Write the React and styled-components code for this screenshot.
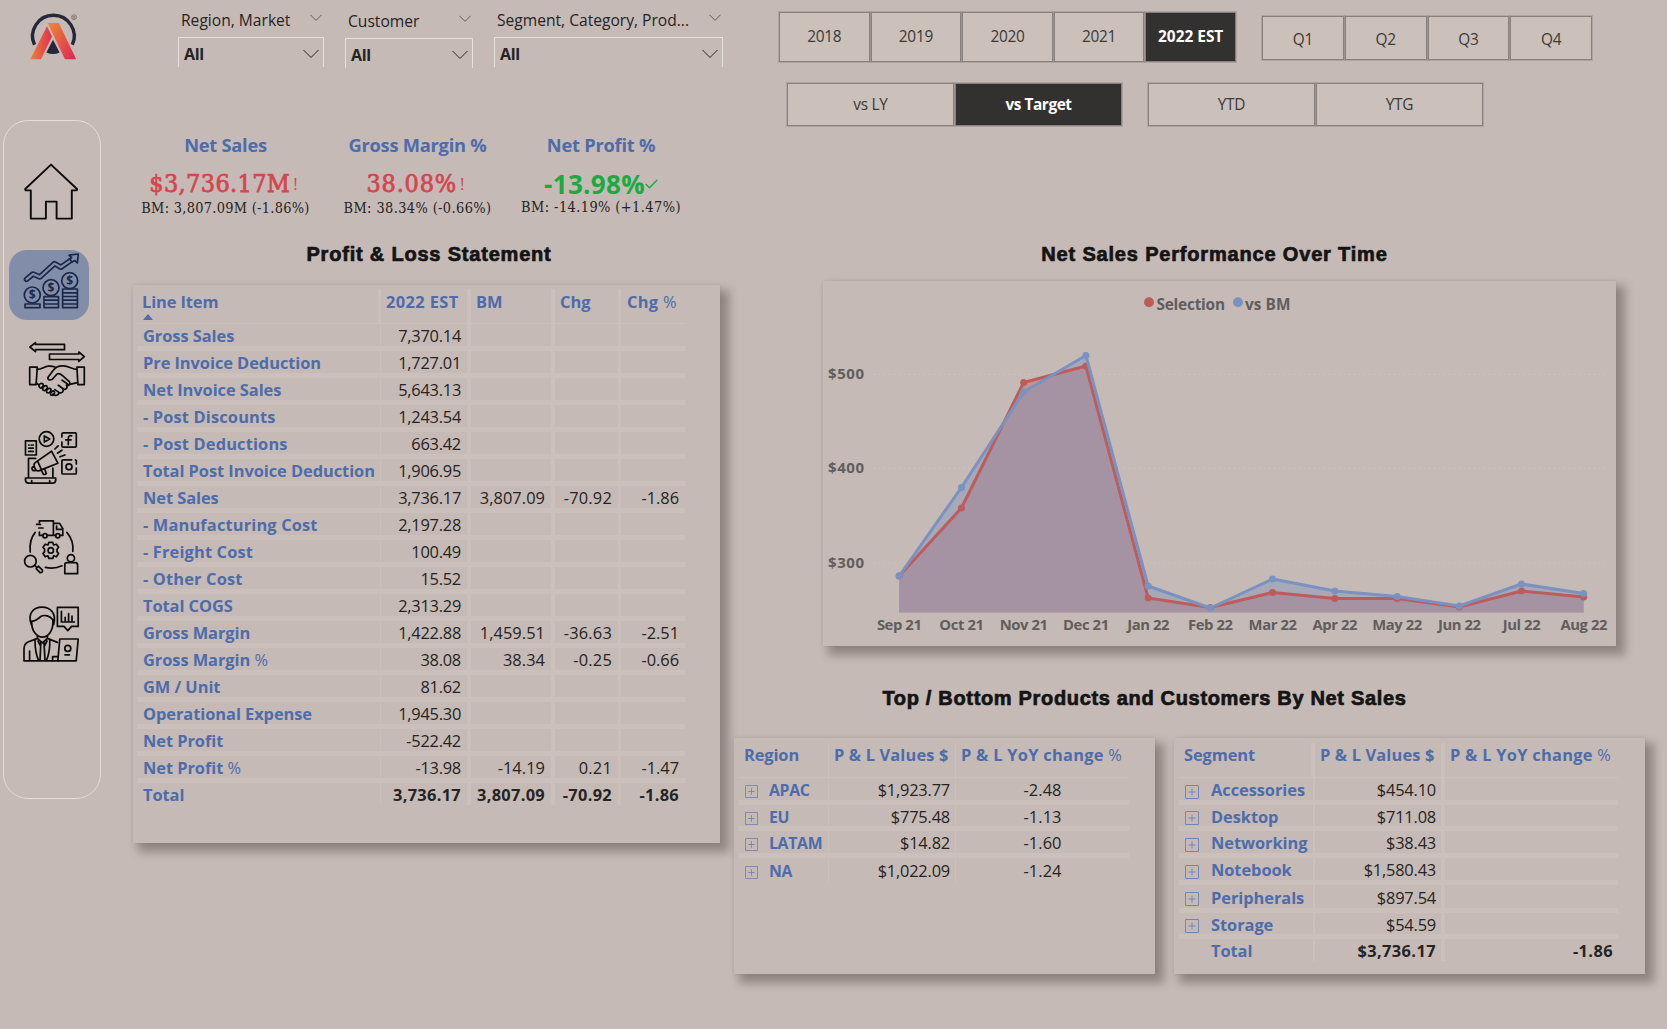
import React from "react";
import styled, { createGlobalStyle, css } from "styled-components";

const sans = `"Open Sans", "Noto Sans", sans-serif`;
const serif = `"DejaVu Serif Condensed", "DejaVu Serif", serif`;
const blue = "#4d6ca9";
const band = "#cbc0bb";

const Global = createGlobalStyle`
  * { box-sizing: border-box; }
  body { margin: 0; background: #c5bab6; font-family: ${sans}; color: #252423; }
`;

const Page = styled.div`
  display: flex;
  width: 1667px;
  height: 1029px;
  overflow: hidden;
  background: #c5bab6;
`;

/* ---------- side rail ---------- */
const Rail = styled.aside`
  width: 133px;
  flex: none;
  padding-left: 3px;
`;
const LogoBox = styled.div`
  height: 120px;
  padding: 10px 0 0 22px;
`;
const Nav = styled.nav`
  width: 98px;
  height: 679px;
  border: 1px solid #e4dddb;
  border-radius: 25px;
  padding: 36px 0 0 5px;
  display: flex;
  flex-direction: column;
`;
const NavItem = styled.a`
  display: block;
  width: 80px;
  height: 70px;
  flex: none;
  margin-top: ${(p) => p.$gap}px;
  border-radius: 18px;
  color: ${(p) => (p.$active ? "#1c2849" : "#0b0b0b")};
  background: ${(p) => (p.$active ? "#818da9" : "transparent")};
`;
const Glyph = styled.svg`
  display: block;
  width: 80px;
  height: 70px;
  fill: none;
  stroke: currentColor;
  stroke-width: ${(p) => p.$w || 1.7};
  stroke-linejoin: round;
  stroke-linecap: round;
  overflow: visible;
`;
const Coin = styled.text`
  font: 700 12px ${sans};
  fill: currentColor;
  stroke: none;
  text-anchor: middle;
`;

function Logo() {
  return (
    <svg width="56" height="52" viewBox="25 10 56 52">
      <defs>
        <linearGradient id="legL" x1="0" x2="1">
          <stop offset="0" stopColor="#ee8136" />
          <stop offset="1" stopColor="#e02f52" />
        </linearGradient>
        <linearGradient id="legR" x1="0" y1="0" x2="1" y2="0.8">
          <stop offset="0.1" stopColor="#ee8136" />
          <stop offset="1" stopColor="#de2c52" />
        </linearGradient>
      </defs>
      <path d="M34.5 44.8A20.8 20.8 0 1 1 72.3 44.8" fill="none" stroke="#25283c" strokeWidth="3.4" />
      <path d="M47 26.3 52 36.6 41 59.3H30.3Z" fill="url(#legL)" />
      <path d="M47.7 23H58.8L76.2 59.3H65Z" fill="url(#legR)" />
      <path d="M53 39.8 59.6 52.6Q53 55.6 46.4 52.6Z" fill="#25283c" />
      <circle cx="74" cy="17.2" r="2.4" fill="none" stroke="#5a5658" strokeWidth="0.6" />
      <text x="74" y="18.7" fontSize="4" textAnchor="middle" fontFamily="Liberation Sans, sans-serif" fill="#4a4648">R</text>
    </svg>
  );
}

const HomeIcon = () => (
  <Glyph $w={1.9} viewBox="0 0 80 70">
    <path d="M42 7.6 16.2 32Q16 33.4 17.5 33.4H21.8V61.6H36.9V44.6H47.6V61.6H62.8V33.4H67Q68.6 33.2 68 32Z" />
  </Glyph>
);
const GrowthIcon = () => (
  <Glyph $w={1.7} viewBox="0 0 80 70">
    <path strokeWidth="5.6" d="M17.5 29.3 24 24 30.8 27 45.5 13.6 52 17.2 64 8.8" />
    <path stroke="#818da9" strokeWidth="2.2" d="M17.5 29.3 24 24 30.8 27 45.5 13.6 52 17.2 64 8.8" />
    <path fill="#818da9" d="M60 5.2 69.2 4 68.4 13 66 10.6 63 12 60.8 9.4 62.6 7.4Z" />
    <circle cx="23.3" cy="45" r="8" />
    <circle cx="42" cy="37.7" r="8" />
    <circle cx="60.7" cy="30.7" r="8" />
    <Coin x="23.3" y="49.3">$</Coin>
    <Coin x="42" y="42">$</Coin>
    <Coin x="60.7" y="35">$</Coin>
    <path d="M16 54H31V57.6H16ZM35 46.6H49.5V50.2H35ZM35 50.2H49.5V54H35ZM35 54H49.5V57.6H35ZM53.6 39H68.4V42.8H53.6ZM53.6 42.8H68.4V46.5H53.6ZM53.6 46.5H68.4V50.2H53.6ZM53.6 50.2H68.4V54H53.6ZM53.6 54H68.4V57.6H53.6Z" />
  </Glyph>
);
const HandshakeIcon = () => (
  <Glyph viewBox="0.5 0 80 70">
    <path d="M21.4 13 27 8.6V10.4H56V15.7H27V17.6ZM41 20H70.3V18L75.8 22.7 70.3 27.4V25.5H41Z" />
    <path d="M21.2 33.2H28.8L27.6 50.6H21.2ZM75.8 33.2H68.4L69.4 50.6H75.8Z" />
    <path d="M28.6 35.4C33 35.6 35.8 32.4 39.5 32.2 42 32 44.5 32.2 46.5 33" />
    <path d="M68.4 35.4C64 35.2 60 32 55 31.8 50 31.6 46.5 33.4 44.6 36.6L39.6 43.2C38.6 45.4 41.4 46.8 43.6 45.4L48.6 40C50.6 39 52.4 40.2 54 41.6L60.8 47.6C62.6 50 60.6 52.4 58 51.2" />
    <path d="M69 48.6C66.6 48.8 64.6 50 62 50.2M27.8 48.8 30.4 51.2" />
    <path d="M58 51.2C59.6 54 57 56.4 54.4 54.8 55.6 58 52.6 59.8 50.2 58.4 50.6 61.6 46.4 62.2 44.2 60.2M60 50.6 53.6 46.2M54.6 54.8 49.8 51.2M50.4 58.4 46.4 55.6" />
    <path d="M30.6 52.6C29.6 50.4 32.6 48.4 34.4 49.8 35.6 51.2 33.4 54.4 31.8 54 31 53.8 30.8 53.2 30.6 52.6ZM34.2 55.2C33.8 52.8 37 50.8 38.4 52.2 39.8 53.8 37.4 56.8 35.8 56.6 34.8 56.4 34.3 56 34.2 55.2ZM38 57.6C37.8 55.2 40.8 53.4 42.2 54.8 43.4 56.4 41.2 59.2 39.6 59 38.6 58.8 38.1 58.4 38 57.6ZM42 60C42 57.8 44.6 56.2 45.8 57.4 46.8 59 45 61.4 43.6 61.4 42.6 61.4 42 61 42 60Z" />
  </Glyph>
);
const MarketingIcon = () => (
  <Glyph viewBox="0.3 0 80 70">
    <path d="M16.8 18.8H27.6V33H16.8ZM20 23H20.4M22.4 23H24.6M20 26.2H24.6M20 29.4H24.6" />
    <circle cx="37.8" cy="17" r="7.3" />
    <path d="M35.6 13.9 41 17 35.6 20.1ZM53.2 15V12Q53.2 10.8 54.6 10.8H66.4Q67.6 10.8 67.6 12V24Q67.6 25.2 66.4 25.2H54.6Q53.2 25.2 53.2 24V20" />
    <path d="M63 13.8Q59.6 13.2 59.6 16.6V22.6M57 17.8H62.4" />
    <path d="M67.6 46V51Q67.6 52 66.6 52H54.4Q53.2 52 53.2 51V39Q53.2 37.8 54.4 37.8H63M66.8 37.8 67.6 38.6V42" />
    <circle cx="60.3" cy="44.8" r="3" />
    <path d="M27 36.4H19.8V55.2M44.2 46V55.2M16.8 56H47V58Q47 61.2 44 61.2H20Q16.8 61.2 16.8 58ZM23 58.6V61M41 58.6V61" />
    <path d="M42.8 29.2 49.2 41.2M42.8 29.2 26.4 40.6Q24.8 42 25.4 44.2L27 47.8Q28 49.4 30.6 48.6L49.2 41.2M29 39.4 32.6 47.4M25.2 44.4Q22.8 45.2 23.4 47.4 24.2 49.4 27 48.4M32.6 48.2 34.6 52.2Q36.2 53 37.6 51.6L36 47" />
    <path d="M46.2 27 49.4 23.8M48.8 31.2 53.2 28.2M51.2 34.8 56.2 33" />
  </Glyph>
);
const SupplyIcon = () => (
  <Glyph viewBox="0 0 80 70">
    <path d="M30.4 20V23.4H33.6M30.4 10.6V8.8H44.4V23.4H38.4M44.4 11.4H50.6L53.8 16.6V23.4H51M46.6 23.4H44.4M47.6 14V17.4H53.4M27.6 12.4H31.4M29.8 16H34" />
    <circle cx="36" cy="23.8" r="2.1" />
    <circle cx="48.8" cy="23.8" r="2.1" />
    <circle cx="41.8" cy="38.4" r="2.7" />
    <path d="M39.8 30.4H43.8L44.6 33 47.4 32.2 49.6 35.2 48 37.2V39.6L49.6 41.6 47.4 44.8 44.6 43.8 43.8 46.4H39.8L39 43.8 36.2 44.8 34 41.6 35.6 39.6V37.2L34 35.2 36.2 32.2 39 33Z" />
    <path d="M26.2 20.4Q20 28 21.2 40M57.8 20.4Q65 28.6 63.8 39.4M36.4 55.4Q45 57.6 53 53.8" />
    <circle cx="21.4" cy="49.2" r="5.8" />
    <path d="M25.6 53.4 27.6 55.2M29.4 54.2 33.4 58.2Q33.8 60.8 31 60.6L27.2 56.6Z" />
    <circle cx="61.9" cy="46.2" r="3.6" />
    <path d="M55.8 61.6V53Q55.8 50.6 58 50.6H66.4Q68.6 50.6 68.6 53V61.6Z" />
  </Glyph>
);
const ExecutiveIcon = () => (
  <Glyph viewBox="0 0 80 70">
    <path d="M22.4 25.6C18 14 25 8.2 33 8.2S48 14 44.6 25.6M22.8 22.4C26 22 29 20 31.6 17.6 36 15 41 17.4 43.8 20.6M22.8 22C22 32 28 38.2 33.4 38.2S44.8 32 43.8 21" />
    <path d="M48.4 8.4H69.2V27.4H62.6L58.8 31.6 55 27.4H48.4ZM52.4 12.4V23H65.4M56.2 22.6V18.4M59.6 22.6V14.6M63 22.6V17" />
    <path d="M28.4 37V39.4L19 43Q15 45 15 50V61.8H49M38.4 37V39.4L48.4 43.4M20.6 52V61.6M28.4 39.4 33.4 43.8 38.4 39.4M26 40.6C26 49 27 56 29.6 61.6M40.8 40.6C41 49 40 56 37.4 61.6M31.8 43.6 31 61.6M35 43.6 36 61.6M29 42 31.6 47M38 42 35.4 47" />
    <path d="M50.8 40H69.2L67.2 61.8H48.8ZM48.6 57.6H43.6V61.8M56 55.8H60.4" />
    <circle cx="58.8" cy="49.4" r="3" />
  </Glyph>
);

const navItems = [
  { id: "home", gap: 0, Icon: HomeIcon },
  { id: "finance", gap: 23, Icon: GrowthIcon, active: true },
  { id: "sales", gap: 14, Icon: HandshakeIcon },
  { id: "marketing", gap: 18, Icon: MarketingIcon },
  { id: "supply", gap: 20, Icon: SupplyIcon },
  { id: "executive", gap: 17, Icon: ExecutiveIcon },
];

/* ---------- filters ---------- */
const LeftColumn = styled.div`
  width: 601px;
  flex: none;
`;
const Filters = styled.div`
  display: flex;
  height: 120px;
  padding-left: 45px;
`;
const Filter = styled.div`
  width: ${(p) => p.$w}px;
  margin-left: ${(p) => p.$ml || 0}px;
  padding-top: ${(p) => p.$top}px;
`;
const FilterHead = styled.div`
  display: flex;
  justify-content: space-between;
  height: 27px;
  padding: 0 2px 0 3px;
  font-size: 15.6px;
  line-height: 21px;
  white-space: nowrap;
`;
const FilterBox = styled.div`
  display: flex;
  justify-content: space-between;
  align-items: center;
  height: 30px;
  padding: 3px 4px 0 5px;
  border: 1.5px solid #e6e0de;
  border-bottom: 0;
  font-size: 16px;
  font-weight: 700;
  letter-spacing: -0.3px;
`;
const Chevron = ({ w = 16, color = "#252423" }) => (
  <svg width={w} height={w * 0.6} viewBox="0 0 16 9.6" fill="none" stroke={color} strokeWidth={16 / w}>
    <path d="M0.5 1 8 8.5 15.5 1" />
  </svg>
);
const HeadChevron = styled.span`
  display: block;
  line-height: 0;
  padding-top: 4px;
`;

/* ---------- KPI ---------- */
const Kpis = styled.div`
  display: flex;
  height: 122px;
`;
const Kpi = styled.div`
  width: ${(p) => p.$w}px;
  text-align: center;
  white-space: nowrap;
`;
const KpiLabel = styled.div`
  height: 48px;
  padding-top: 12px;
  color: ${blue};
  font-size: 18.3px;
  font-weight: 700;
  line-height: 26px;
  letter-spacing: -0.25px;
`;
const KpiValue = styled.div`
  display: flex;
  justify-content: center;
  align-items: center;
  height: 30px;
  ${(p) =>
    p.$good
      ? css`
          color: #1aab40;
          font: 700 26px/30px ${sans};
          letter-spacing: 0.3px;
          padding-top: 1px;
        `
      : css`
          color: #d64550;
          font: 400 25px/30px ${serif};
          -webkit-text-stroke: 0.75px #d64550;
          letter-spacing: ${p.$ls}px;
          padding: 2px 4px 0 0;
        `}
`;
const Bang = styled.span`
  font: 400 17px/30px ${sans};
  margin-left: 3px;
  letter-spacing: 0;
  -webkit-text-stroke: 0;
`;
const KpiBench = styled.div`
  font: 400 14.4px/20px ${serif};
  margin-top: ${(p) => p.$mt || 0}px;
  letter-spacing: ${(p) => p.$ls || 0}px;
`;

/* ---------- titles, cards ---------- */
const Title = styled.h2`
  margin: 0;
  text-align: center;
  font: 700 20px/24px "Liberation Sans", Arial, sans-serif;
  color: #141414;
  -webkit-text-stroke: 0.7px #141414;
  letter-spacing: ${(p) => p.$ls}px;
  height: ${(p) => p.$h}px;
  padding-right: ${(p) => p.$pr || 0}px;
  white-space: nowrap;
`;
const Card = styled.section`
  width: ${(p) => p.$w}px;
  height: ${(p) => p.$h}px;
  background: #c5bab6;
  box-shadow: 7px 7px 9px 2px rgba(20, 8, 6, 0.29), 0 0 3px rgba(0, 0, 0, 0.08);
`;

/* ---------- tables ---------- */
const Grid = styled.div`
  display: grid;
  grid-template-columns: ${(p) => p.$cols};
  width: max-content;
  margin-left: ${(p) => p.$ml}px;
  padding-top: ${(p) => p.$pt}px;
`;
const Head = styled.div`
  height: ${(p) => p.$h}px;
  border-bottom: 1px solid ${band};
  border-right: ${(p) => p.$bar}px solid ${band};
  padding: ${(p) => p.$pad};
  color: ${blue};
  font-size: 16.4px;
  font-weight: 700;
  line-height: 22px;
  letter-spacing: ${(p) => p.$ls || 0}px;
  white-space: nowrap;
`;
const SortUp = styled.i`
  display: block;
  width: 0;
  margin: 1px 0 0 1px;
  border: 5.5px solid transparent;
  border-top: 0;
  border-bottom: 6px solid ${blue};
`;
const Cell = styled.div`
  display: flex;
  align-items: center;
  justify-content: ${(p) => p.$align || "flex-end"};
  height: ${(p) => p.$h}px;
  border-bottom: ${(p) => (p.$last ? 0 : 5)}px solid ${band};
  border-right: ${(p) => p.$bar}px solid ${band};
  padding: ${(p) => p.$pad};
  font-size: ${(p) => p.$size || 16.4}px;
  font-weight: ${(p) => (p.$label || p.$bold ? 700 : 400)};
  letter-spacing: ${(p) => p.$ls || 0}px;
  color: ${(p) => (p.$label ? blue : "#252423")};
  line-height: 20px;
  white-space: pre;
`;
const Light = styled.span`
  font-weight: 500;
`;
const withLightPercent = (text) =>
  text.endsWith("%") ? <>{text.slice(0, -1)}<Light>%</Light></> : text;

const plRows = [
  ["Gross Sales", "7,370.14"],
  ["Pre Invoice Deduction", "1,727.01"],
  ["Net Invoice Sales", "5,643.13"],
  ["- Post Discounts", "1,243.54"],
  ["- Post Deductions", "663.42"],
  ["Total Post Invoice Deduction", "1,906.95"],
  ["Net Sales", "3,736.17", "3,807.09", "-70.92", "-1.86"],
  ["- Manufacturing Cost", "2,197.28"],
  ["- Freight Cost", "100.49"],
  ["- Other Cost", "15.52"],
  ["Total COGS", "2,313.29"],
  ["Gross Margin", "1,422.88", "1,459.51", "-36.63", "-2.51"],
  ["Gross Margin %", "38.08", "38.34", "-0.25", "-0.66"],
  ["GM / Unit", "81.62"],
  ["Operational Expense", "1,945.30"],
  ["Net Profit", "-522.42"],
  ["Net Profit %", "-13.98", "-14.19", "0.21", "-1.47"],
  ["Total", "3,736.17", "3,807.09", "-70.92", "-1.86"],
];
const plBars = [1, 4, 4, 3, 0];
const plSpacing = [0, -0.25, 0.05, 0.2, -0.05];

function ProfitLoss() {
  return (
    <Grid $cols="244px 90px 84px 66px 64px" $ml={4} $pt={4}>
      <Head $h={35} $bar={3} $pad="2px 0 0 5px" $ls={-0.1}>Line Item<SortUp /></Head>
      <Head $h={35} $bar={4} $pad="2px 0 0 5px" $ls={0.4}>2022 EST</Head>
      <Head $h={35} $bar={4} $pad="2px 0 0 5px">BM</Head>
      <Head $h={35} $bar={3} $pad="2px 0 0 5px">Chg</Head>
      <Head $h={35} $bar={0} $pad="2px 0 0 6px" $ls={0.3}>{withLightPercent("Chg %")}</Head>
      {plRows.map((r, i) => {
        const last = i === plRows.length - 1;
        const common = { $h: last ? 22 : 27, $last: last };
        return (
          <React.Fragment key={i}>
            <Cell {...common} $label $align="flex-start" $bar={1} $pad="2px 0 0 6px" $ls={r[0].startsWith("-") ? 0.15 : -0.05}>
              {withLightPercent(r[0])}
            </Cell>
            {[1, 2, 3, 4].map((c) => (
              <Cell key={c} {...common} $bold={last} $bar={plBars[c]} $pad="2px 6px 0 0" $ls={last ? 0.3 : plSpacing[c]}>
                {r[c]}
              </Cell>
            ))}
          </React.Fragment>
        );
      })}
    </Grid>
  );
}

/* ---------- slicer buttons ---------- */
const RightColumn = styled.div`
  flex: 1;
`;
const Slicers = styled.div`
  display: flex;
  align-items: flex-start;
  height: ${(p) => p.$h}px;
  padding: ${(p) => p.$pad};
`;
const Slicer = styled.div`
  display: flex;
  gap: ${(p) => p.$gap || 1}px;
  margin: ${(p) => p.$m || 0};
`;
const Tile = styled.button`
  width: ${(p) => p.$w}px;
  height: ${(p) => p.$h}px;
  padding: ${(p) => p.$pad || "1px 0 0"};
  border: 1.5px solid #88807d;
  outline: 1px solid rgba(110, 100, 98, 0.25);
  outline-offset: -0.5px;
  background: ${(p) => (p.$on ? "#323130" : "#cbc0ba")};
  color: ${(p) => (p.$on ? "#fff" : "#3b3a39")};
  font: ${(p) => (p.$on ? 700 : 400)} 15.4px/20px ${sans};
  letter-spacing: ${(p) => p.$ls ?? -0.25}px;
  white-space: nowrap;
`;

/* ---------- chart ---------- */
const Tick = styled.text`
  font: 700 ${(p) => p.$size || 15}px ${sans};
  fill: #605e5c;
  text-anchor: ${(p) => p.$anchor || "middle"};
  letter-spacing: ${(p) => p.$ls || 0}px;
`;
const Plot = styled.svg`
  display: block;
`;
const months = ["Sep 21", "Oct 21", "Nov 21", "Dec 21", "Jan 22", "Feb 22", "Mar 22", "Apr 22", "May 22", "Jun 22", "Jul 22", "Aug 22"];
const benchY = [576, 487.5, 392, 355.5, 586, 608, 579, 591, 596.5, 606, 584, 593.5];
const selectY = [576, 508, 382.5, 366, 598, 607.5, 592.5, 598.5, 598.5, 607, 591, 597];
const px = (i) => 899.2 + i * 62.23;

function Series({ ys, color }) {
  const pts = ys.map((y, i) => `${px(i)},${y}`).join(" ");
  return (
    <>
      <polyline points={pts} fill="none" stroke={color} strokeWidth="3" strokeLinejoin="round" />
      {ys.map((y, i) => <circle key={i} cx={px(i)} cy={y} r="3.5" fill={color} />)}
    </>
  );
}
function Area({ ys, color }) {
  const pts = ys.map((y, i) => `${px(i)},${y}`).join(" ");
  return <polygon points={`${px(0)},612.5 ${pts} ${px(11)},612.5`} fill={color} fillOpacity="0.4" />;
}
function SalesChart() {
  return (
    <Plot width="793" height="365" viewBox="823 281 793 365">
      <circle cx="1149" cy="302.3" r="5" fill="#be5c5c" />
      <Tick x="1156.5" y="309.5" $anchor="start" $size={15.4} textLength="68.5">Selection</Tick>
      <circle cx="1238" cy="302.3" r="5" fill="#7a92bf" />
      <Tick x="1245" y="309.5" $anchor="start" $size={15.4} textLength="45.5">vs BM</Tick>
      {[["$500", 374.5], ["$400", 468.5], ["$300", 563]].map(([t, y]) => (
        <g key={t}>
          <line x1="874" x2="1606" y1={y} y2={y} stroke="#d0c5c8" strokeDasharray="1 4" />
          <Tick x="828" y={y + 4.7} $anchor="start" textLength="36">{t}</Tick>
        </g>
      ))}
      <Area ys={selectY} color="#be5c5c" />
      <Area ys={benchY} color="#7a92bf" />
      <Series ys={selectY} color="#be5c5c" />
      <Series ys={benchY} color="#7a92bf" />
      {months.map((m, i) => (
        <Tick key={m} x={px(i)} y="630" $size={14.8} $ls={-0.4}>{m}</Tick>
      ))}
    </Plot>
  );
}

/* ---------- breakdown tables ---------- */
const Pair = styled.div`
  display: flex;
  gap: 19px;
`;
const Plus = styled.svg`
  flex: none;
  margin: 3px ${(p) => p.$mr}px 0 0;
  fill: none;
  stroke: #7287b3;
`;
const Blank = styled.span`
  width: 26px;
`;
const rowHeights = [27, 26, 27, 27, 28, 26];

function Breakdown({ title, rows, cols, bars, box, gap, center, labelSize, labelSpacing }) {
  return (
    <Grid $cols={cols} $ml={5} $pt={5}>
      <Head $h={35} $bar={bars[0]} $pad="1px 0 0 5px" $ls={-0.1}>{title}</Head>
      <Head $h={35} $bar={bars[1]} $pad="1px 0 0 5px" $ls={0.15}>{"P & L Values $"}</Head>
      <Head $h={35} $bar={0} $pad="1px 0 0 5px" $ls={0.28}>{withLightPercent("P & L YoY change %")}</Head>
      {rows.map(([name, value, yoy], i) => {
        const last = i === rows.length - 1;
        const total = name === "Total";
        const common = { $h: last ? (total ? 22 : 24) : rowHeights[i], $last: last };
        return (
          <React.Fragment key={name}>
            <Cell {...common} $label $size={labelSize} $align="flex-start" $bar={bars[0] > 1 ? 2 : 1} $pad="2px 0 0 6px" $ls={labelSpacing}>
              {total ? (
                <Blank />
              ) : (
                <Plus $mr={gap} width={box} height={box} viewBox="0 0 14 14">
                  <path d="M0.5 0.5H13.5V13.5H0.5ZM7 3.5V10.5M3.5 7H10.5" />
                </Plus>
              )}
              {name}
            </Cell>
            <Cell {...common} $bold={total} $bar={bars[1]} $pad="2px 5px 0 0" $ls={total ? 0.4 : -0.2}>{value}</Cell>
            <Cell {...common} $bold={total} $bar={0} $align={center ? "center" : "flex-end"} $pad={center ? "2px 0 0 0" : "2px 5px 0 0"} $ls={total ? 0.4 : 0.1}>{yoy}</Cell>
          </React.Fragment>
        );
      })}
    </Grid>
  );
}

const regions = [
  ["APAC", "$1,923.77", "-2.48"],
  ["EU", "$775.48", "-1.13"],
  ["LATAM", "$14.82", "-1.60"],
  ["NA", "$1,022.09", "-1.24"],
];
const segments = [
  ["Accessories", "$454.10"],
  ["Desktop", "$711.08"],
  ["Networking", "$38.43"],
  ["Notebook", "$1,580.43"],
  ["Peripherals", "$897.54"],
  ["Storage", "$54.59"],
  ["Total", "$3,736.17", "-1.86"],
];

const ChartBlock = styled.div`
  width: 793px;
  margin-left: 89px;
`;
const BottomTitle = styled.div`
  width: 821px;
  padding-top: 40px;
`;

export default function App() {
  return (
    <>
      <Global />
      <Page>
        <Rail>
          <LogoBox><Logo /></LogoBox>
          <Nav>
            {navItems.map(({ id, gap, Icon, active }) => (
              <NavItem key={id} $gap={gap} $active={active}><Icon /></NavItem>
            ))}
          </Nav>
        </Rail>

        <LeftColumn>
          <Filters>
            <Filter $w={146} $top={10}>
              <FilterHead>Region, Market<HeadChevron><Chevron w={12} color="#605e5c" /></HeadChevron></FilterHead>
              <FilterBox>All<Chevron /></FilterBox>
            </Filter>
            <Filter $w={128} $ml={21} $top={11}>
              <FilterHead>Customer<HeadChevron><Chevron w={12} color="#605e5c" /></HeadChevron></FilterHead>
              <FilterBox>All<Chevron /></FilterBox>
            </Filter>
            <Filter $w={229} $ml={21} $top={10}>
              <FilterHead>Segment, Category, Prod...<HeadChevron><Chevron w={12} color="#605e5c" /></HeadChevron></FilterHead>
              <FilterBox>All<Chevron /></FilterBox>
            </Filter>
          </Filters>

          <Kpis>
            <Kpi $w={185}>
              <KpiLabel>Net Sales</KpiLabel>
              <KpiValue $ls={0.35}>$3,736.17M<Bang>!</Bang></KpiValue>
              <KpiBench $ls={0.3}>BM: 3,807.09M (-1.86%)</KpiBench>
            </Kpi>
            <Kpi $w={199}>
              <KpiLabel>Gross Margin %</KpiLabel>
              <KpiValue $ls={0.8}>38.08%<Bang>!</Bang></KpiValue>
              <KpiBench $ls={0.4}>BM: 38.34% (-0.66%)</KpiBench>
            </Kpi>
            <Kpi $w={168}>
              <KpiLabel>Net Profit %</KpiLabel>
              <KpiValue $good>
                -13.98%
                <svg width="13" height="10" viewBox="0 0 13 10" fill="none" stroke="#1aab40" strokeWidth="1.4">
                  <path d="M0.7 5 4.4 8.7 12.3 0.8" />
                </svg>
              </KpiValue>
              <KpiBench $mt={-1} $ls={0.43}>BM: -14.19% (+1.47%)</KpiBench>
            </Kpi>
          </Kpis>

          <Title $ls={0.8} $h={43} $pr={9}>{"Profit & Loss Statement"}</Title>
          <Card $w={587} $h={558}><ProfitLoss /></Card>
        </LeftColumn>

        <RightColumn>
          <Slicers $h={82} $pad="12px 0 0 45px">
            <Slicer>
              {["2018", "2019", "2020", "2021", "2022 EST"].map((t) => (
                <Tile key={t} $w={90.6} $h={49.5} $on={t === "2022 EST"} $ls={t === "2022 EST" ? 0 : -0.25}>{t}</Tile>
              ))}
            </Slicer>
            <Slicer $m="4px 0 0 26px">
              {["Q1", "Q2", "Q3", "Q4"].map((t) => (
                <Tile key={t} $w={81.8} $h={44} $pad="3px 0 0">{t}</Tile>
              ))}
            </Slicer>
          </Slicers>
          <Slicers $h={160} $pad="1px 0 0 53px">
            <Slicer>
              <Tile $w={167} $h={43} $pad="0">vs LY</Tile>
              <Tile $w={167} $h={43} $pad="0" $on $ls={-0.45}>vs Target</Tile>
            </Slicer>
            <Slicer $m="0 0 0 26px">
              <Tile $w={167} $h={43} $pad="0">YTD</Tile>
              <Tile $w={167} $h={43} $pad="0">YTG</Tile>
            </Slicer>
          </Slicers>
          <ChartBlock>
            <Title $ls={0.82} $h={39} $pr={10}>Net Sales Performance Over Time</Title>
            <Card $w={793} $h={365}><SalesChart /></Card>
          </ChartBlock>
          <BottomTitle>
            <Title $ls={0.67} $h={52}>Top / Bottom Products and Customers By Net Sales</Title>
          </BottomTitle>
          <Pair>
            <Card $w={421} $h={236}>
              <Breakdown title="Region" rows={regions} cols="90px 127px 173px" bars={[1, 1]} box={13} gap={11} center labelSize={15.8} labelSpacing={-0.3} />
            </Card>
            <Card $w={471} $h={236}>
              <Breakdown title="Segment" rows={segments} cols="136px 130px 173px" bars={[4, 4]} box={14} gap={12} labelSize={16.4} labelSpacing={-0.05} />
            </Card>
          </Pair>
        </RightColumn>
      </Page>
    </>
  );
}
